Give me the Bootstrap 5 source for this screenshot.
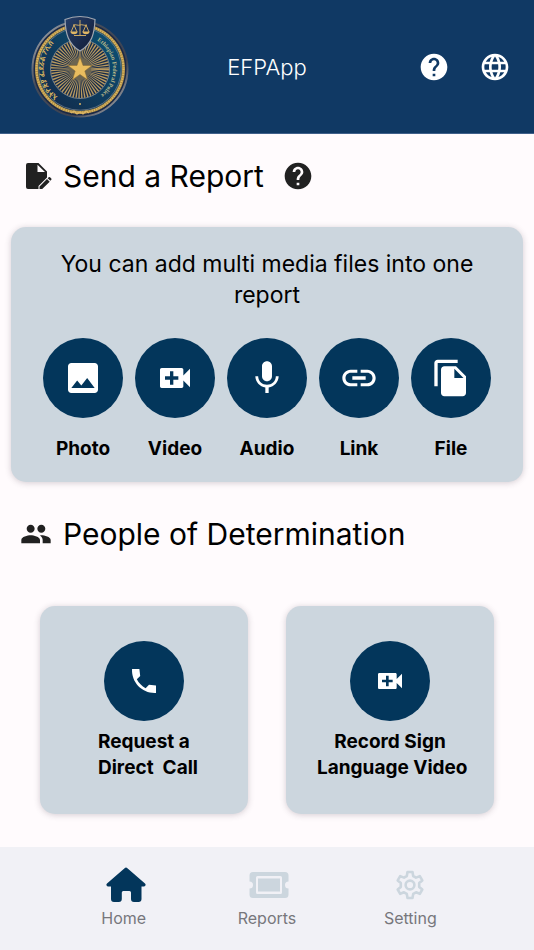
<!DOCTYPE html>
<html lang="en">
<head>
<meta charset="utf-8">
<meta name="viewport" content="width=device-width, initial-scale=1">
<title>EFPApp</title>
<link rel="stylesheet" href="https://cdn.jsdelivr.net/npm/bootstrap@5.3.0/dist/css/bootstrap.min.css">
<style>
  body { font-family: Inter, "Open Sans", sans-serif; background: #fffbfd; color: #000; }
  svg { display: block; fill: currentColor; }
  .app-header { background: #103964; color: #fff; min-height: 134px; border-bottom: 1px solid #40608a; padding: 14px 22px 13px; }
  .app-title { font-size: 22px; line-height: 32px; font-weight: 300; }
  .emblem { margin-left: 6px; }
  .side { flex: 1 1 0; }
  .icon-btn { background: none; border: 0; padding: 0; color: inherit; }
  .heading-row { padding: 22px 20px 0; }
  .heading-row.second { padding-top: 32px; }
  .heading { font-size: 30px; line-height: 40px; font-weight: 400; margin: 0 0 0 11px; }
  .head-icon { width: 32px; color: #212121; }
  .info-btn { margin-left: 18px; }
  .panel { background: #ccd6de; border-radius: 15px; box-shadow: 0 1px 6px rgba(60, 40, 60, .22); }
  .media-panel { margin: 31px 11px 0; padding: 22px 26px 20px; }
  .intro { font-size: 23px; line-height: 31px; margin: 0 8px 27px; }
  .round { width: 80px; height: 80px; border-radius: 50%; background: #03365b; color: #fff; }
  .media-btn { width: 92px; gap: 18px; }
  .label-bold { font-size: 19px; line-height: 26px; font-weight: 700; color: #000; }
  .assist { padding: 52px 40px 24px; gap: 38px; }
  .assist .panel { flex: 1 1 0; min-height: 208px; padding-top: 35px; border: 0; }
  .assist .label-bold { white-space: pre; margin-top: 8px; }
  .tabs { background: #f1f1f6; padding: 17px 52px 20px; min-height: 103px; }
  .tab { color: #77777c; font-size: 16px; line-height: 24px; }
  .tab-icon { height: 42px; color: #ccd6de; }
  .tab.active .tab-icon { color: #03365b; }
</style>
<script src="https://cdn.jsdelivr.net/npm/bootstrap@5.3.0/dist/js/bootstrap.bundle.min.js"></script>
</head>
<body class="d-flex flex-column min-vh-100">

<svg width="0" height="0" class="position-absolute" aria-hidden="true">
  <symbol id="i-help" viewBox="0 0 24 24"><path d="M12 2C6.48 2 2 6.48 2 12s4.48 10 10 10 10-4.48 10-10S17.52 2 12 2zm1 17h-2v-2h2v2zm2.07-7.75l-.9.92C13.45 12.9 13 13.5 13 15h-2v-.5c0-1.1.45-2.1 1.17-2.83l1.24-1.26c.37-.36.59-.86.59-1.41 0-1.1-.9-2-2-2s-2 .9-2 2H8c0-2.21 1.79-4 4-4s4 1.79 4 4c0 .88-.36 1.68-.93 2.25z"/></symbol>
  <symbol id="i-video" viewBox="0 0 24 24"><path d="M17 10.5V7c0-.55-.45-1-1-1H4c-.55 0-1 .45-1 1v10c0 .55.45 1 1 1h12c.55 0 1-.45 1-1v-3.5l4 4v-11l-4 4zM14 13h-3v3H9v-3H6v-2h3V8h2v3h3v2z"/></symbol>
</svg>

<header class="app-header d-flex align-items-center">
  <div class="side">
    <svg class="emblem" width="104" height="106" viewBox="0 0 104 106" role="img" aria-label="Ethiopian Federal Police emblem">
      <defs>
        <linearGradient id="rim" x1="0" y1="0" x2="1" y2="1"><stop offset="0" stop-color="#b9bcc0"/><stop offset=".35" stop-color="#444b59"/><stop offset=".7" stop-color="#3b4252"/><stop offset="1" stop-color="#c3c3c3"/></linearGradient>
        <linearGradient id="band" x1="0" y1="1" x2="1" y2="0"><stop offset="0" stop-color="#132747"/><stop offset="1" stop-color="#0a5478"/></linearGradient>
        <linearGradient id="shield" x1="0" y1="0" x2="1" y2="1"><stop offset="0" stop-color="#27406b"/><stop offset="1" stop-color="#101b36"/></linearGradient>
        <path id="arc-left" d="M33 85A36 36 0 0 1 34 23"/>
        <path id="arc-right" d="M69 26.700A33 33 0 0 1 69 83.300"/>
      </defs>
      <circle cx="52" cy="55" r="47.500" fill="#1b2947" stroke="url(#rim)" stroke-width="2"/>
      <circle cx="52" cy="55" r="43.500" fill="url(#band)" stroke="#b08f45" stroke-width="3"/>
      <circle cx="52" cy="55" r="43.500" fill="none" stroke="#dcb866" stroke-width="2" stroke-dasharray="1.200 1.200"/>
      <circle cx="52" cy="55" r="41.200" fill="none" stroke="#7d8590" stroke-width=".7"/>
      <circle cx="52" cy="55" r="29.500" fill="#172b49" stroke="#8f9699" stroke-width=".8"/>
      <circle cx="52" cy="55" r="18.500" fill="none" stroke="#b89a60" stroke-width="21" stroke-dasharray=".97 .967"/>
      <circle cx="52" cy="55" r="11" fill="#6c6550"/>
      <path d="M52 43l3 8.500h9l-7.200 5.500 2.700 8.700-7.500-5.200-7.500 5.200 2.700-8.700-7.200-5.500h9z" fill="#e9bd5f" stroke="#8a6a31" stroke-width=".5"/>
      <circle cx="52" cy="90" r="1" fill="#dcb564"/>
      <path d="M43 99l3-2 3 3 3-2 3 2 3-3 3 2" fill="none" stroke="#dcb564" stroke-width="1.300"/>
      <g fill="#d9b45f" font-family="'Noto Sans Ethiopic','Noto Sans',sans-serif">
        <text font-size="7" font-weight="700"><textPath href="#arc-left" startOffset="4">ኢትዮጵያ ፌደራል ፖሊስ</textPath></text>
        <text font-size="6" font-weight="700" font-family="'Liberation Serif',serif" fill="#b9b98a"><textPath href="#arc-right">Ethiopian Federal Police</textPath></text>
      </g>
      <path d="M52 2.500c5 0 10 1 15 3C66.500 19 64 30 52 37 40 30 37.500 19 37 5.500 42 3.500 47 2.500 52 2.500z" fill="url(#shield)" stroke="#a1a7b1" stroke-width="1.200"/>
      <path d="M52 6v15M46 21.500h12M45 11c3-1 5 1 7 0s4 1 7 0M46 11l-3 7M46 11l3 7M58 11l-3 7M58 11l3 7" fill="none" stroke="#dfb665" stroke-width=".9"/>
      <path d="M42.500 17.500h7a3.500 2.800 0 0 1-7 0zM54.500 17.500h7a3.500 2.800 0 0 1-7 0z" fill="#dfb665"/>
    </svg>
  </div>
  <h1 class="app-title m-0">EFPApp</h1>
  <div class="side d-flex justify-content-end align-items-center">
    <button class="icon-btn" type="button" aria-label="Help"><svg width="32" height="32"><use href="#i-help"/></svg></button>
    <button class="icon-btn ms-4 ps-1" type="button" aria-label="Language"><svg width="34" height="32" viewBox="0 0 24 24"><path d="M11.990 2C6.470 2 2 6.480 2 12s4.470 10 9.990 10C17.520 22 22 17.520 22 12S17.520 2 11.990 2zm6.930 6h-2.950c-.32-1.250-.78-2.450-1.380-3.560 1.840.63 3.370 1.910 4.330 3.560zM12 4.040c.83 1.200 1.480 2.530 1.910 3.960h-3.820c.43-1.430 1.080-2.760 1.910-3.960zM4.260 14C4.100 13.360 4 12.690 4 12s.1-1.360.26-2h3.380c-.08.66-.14 1.320-.14 2 0 .68.06 1.340.14 2H4.260zm.82 2h2.950c.32 1.250.78 2.450 1.380 3.560-1.840-.63-3.370-1.900-4.330-3.560zm2.950-8H5.080c.96-1.660 2.490-2.930 4.330-3.560C8.810 5.550 8.350 6.750 8.030 8zM12 19.960c-.83-1.200-1.480-2.530-1.910-3.960h3.820c-.43 1.430-1.080 2.760-1.910 3.960zM14.340 14H9.660c-.09-.66-.16-1.320-.16-2 0-.68.07-1.350.16-2h4.680c.09.65.16 1.320.16 2 0 .68-.07 1.340-.16 2zm.25 5.560c.6-1.110 1.060-2.310 1.380-3.560h2.950c-.96 1.650-2.490 2.930-4.330 3.560zM16.360 14c.08-.66.14-1.320.14-2 0-.68-.06-1.340-.14-2h3.380c.16.64.26 1.310.26 2s-.1 1.360-.26 2h-3.380z"/></svg></button>
  </div>
</header>

<main>
  <section aria-labelledby="h-report">
    <div class="heading-row d-flex align-items-center">
      <svg class="head-icon" height="28" viewBox="0 0 32 28"><path d="M8 1h10.500L27 9.500v6L18.500 24v3H8a2 2 0 0 1-2-2V3a2 2 0 0 1 2-2zm9.500 1.800V10H25z"/><path d="M19.500 24.500l7.500-7.500 2.700 2.700-7.500 7.300h-2.700zM27.700 16.200l1-1a1 1 0 0 1 1.300 0l1.300 1.300a1 1 0 0 1 0 1.300l-1 1z"/></svg>
      <h2 id="h-report" class="heading">Send a Report</h2>
      <button class="icon-btn head-icon info-btn" type="button" aria-label="About reports"><svg width="32" height="32"><use href="#i-help"/></svg></button>
    </div>
    <div class="panel media-panel text-center">
      <p class="intro">You can add multi media files into one report</p>
      <div class="d-flex justify-content-center">
        <button class="icon-btn media-btn d-flex flex-column align-items-center" type="button">
          <span class="round d-flex align-items-center justify-content-center"><svg width="40" height="40" viewBox="0 0 24 24"><path d="M21 19V5c0-1.100-.9-2-2-2H5c-1.100 0-2 .9-2 2v14c0 1.100.9 2 2 2h14c1.100 0 2-.9 2-2zM8.500 13.500l2.500 3.010L14.500 12l4.500 6H5l3.500-4.500z"/></svg></span>
          <span class="label-bold">Photo</span>
        </button>
        <button class="icon-btn media-btn d-flex flex-column align-items-center" type="button">
          <span class="round d-flex align-items-center justify-content-center"><svg width="40" height="40"><use href="#i-video"/></svg></span>
          <span class="label-bold">Video</span>
        </button>
        <button class="icon-btn media-btn d-flex flex-column align-items-center" type="button">
          <span class="round d-flex align-items-center justify-content-center"><svg width="40" height="40" viewBox="0 0 24 24"><path d="M12 14c1.660 0 2.990-1.340 2.990-3L15 5c0-1.660-1.340-3-3-3S9 3.340 9 5v6c0 1.660 1.340 3 3 3zm5.300-3c0 3-2.540 5.100-5.300 5.100S6.700 14 6.700 11H5c0 3.410 2.720 6.230 6 6.720V21h2v-3.280c3.280-.48 6-3.300 6-6.720h-1.700z"/></svg></span>
          <span class="label-bold">Audio</span>
        </button>
        <button class="icon-btn media-btn d-flex flex-column align-items-center" type="button">
          <span class="round d-flex align-items-center justify-content-center"><svg width="40" height="40" viewBox="0 0 24 24"><path d="M3.900 12c0-1.710 1.390-3.100 3.100-3.100h4V7H7c-2.760 0-5 2.240-5 5s2.240 5 5 5h4v-1.900H7c-1.710 0-3.100-1.390-3.100-3.100zM8 13h8v-2H8v2zm9-6h-4v1.900h4c1.710 0 3.100 1.390 3.100 3.100s-1.390 3.100-3.100 3.100h-4V17h4c2.760 0 5-2.240 5-5s-2.240-5-5-5z"/></svg></span>
          <span class="label-bold">Link</span>
        </button>
        <button class="icon-btn media-btn d-flex flex-column align-items-center" type="button">
          <span class="round d-flex align-items-center justify-content-center"><svg width="40" height="40" viewBox="0 0 24 24"><path d="M16 1H4c-1.100 0-2 .9-2 2v14h2V3h12V1zm-1 4l6 6v10c0 1.100-.9 2-2 2H7.990C6.890 23 6 22.100 6 21l.01-14c0-1.100.89-2 1.990-2h7zm-1 7h5.500L14 6.500V12z"/></svg></span>
          <span class="label-bold">File</span>
        </button>
      </div>
    </div>
  </section>

  <section aria-labelledby="h-people">
    <div class="heading-row second d-flex align-items-center">
      <svg class="head-icon" height="32" viewBox="0 0 24 24"><path d="M16 11c1.660 0 2.990-1.340 2.990-3S17.660 5 16 5s-3 1.340-3 3 1.340 3 3 3zm-8 0c1.660 0 2.990-1.340 2.990-3S9.660 5 8 5 5 6.340 5 8s1.340 3 3 3zm0 2c-2.330 0-7 1.170-7 3.500V19h14v-2.500c0-2.330-4.670-3.500-7-3.500zm8 0c-.29 0-.62.02-.97.05 1.160.84 1.970 1.970 1.970 3.450V19h6v-2.500c0-2.330-4.670-3.500-7-3.500z"/></svg>
      <h2 id="h-people" class="heading">People of Determination</h2>
    </div>
    <div class="assist d-flex">
      <button class="panel d-flex flex-column align-items-center" type="button">
        <span class="round d-flex align-items-center justify-content-center"><svg width="32" height="32" viewBox="0 0 24 24"><path d="M21 15.460l-5.270-.61-2.520 2.520c-2.830-1.440-5.150-3.750-6.590-6.590l2.530-2.530L8.540 3H3.030C2.450 13.180 10.820 21.550 21 20.970v-5.510z"/></svg></span>
        <span class="label-bold text-start ps-2">Request a
Direct  Call</span>
      </button>
      <button class="panel d-flex flex-column align-items-center" type="button">
        <span class="round d-flex align-items-center justify-content-center"><svg width="32" height="32"><use href="#i-video"/></svg></span>
        <span class="label-bold text-center">Record Sign
 Language Video</span>
      </button>
    </div>
  </section>
</main>

<nav class="tabs d-flex mt-auto" aria-label="Main">
  <a class="tab active side d-flex flex-column align-items-center text-decoration-none" href="#" aria-current="page">
    <span class="tab-icon d-flex align-items-center"><svg class="ms-1" width="40" height="36" viewBox="0 0 40 36"><path d="M18.600 1.200a2 2 0 0 1 2.800 0L39 16.400c1.200 1.200.6 3-1 3h-2.500V32a3 3 0 0 1-3 3H28a3 3 0 0 1-3-3v-6.500a1.500 1.500 0 0 0-1.500-1.500h-6.200a1.500 1.500 0 0 0-1.500 1.500V32a3 3 0 0 1-3 3H8a3 3 0 0 1-3-3V19.400H2c-1.600 0-2.200-1.800-1-3z"/></svg></span>
    <span>Home</span>
  </a>
  <a class="tab side d-flex flex-column align-items-center text-decoration-none" href="#">
    <span class="tab-icon d-flex align-items-center"><svg class="ms-1" width="40" height="26" viewBox="0 0 40 26"><path fill-rule="evenodd" d="M4 0h32a3.500 3.500 0 0 1 3.500 3.500V9.500a3.500 3.500 0 0 0 0 7v6A3.500 3.500 0 0 1 36 26H4a3.500 3.500 0 0 1-3.500-3.500v-6a3.500 3.500 0 0 0 0-7v-6A3.500 3.500 0 0 1 4 0zM8.500 4A1.500 1.500 0 0 0 7 5.500v15A1.500 1.500 0 0 0 8.500 22h23a1.500 1.500 0 0 0 1.500-1.500v-15A1.500 1.500 0 0 0 31.500 4zM9 6.500h22v13H9z"/></svg></span>
    <span>Reports</span>
  </a>
  <a class="tab side d-flex flex-column align-items-center text-decoration-none" href="#">
    <span class="tab-icon d-flex align-items-center"><svg width="28" height="30" viewBox="0 0 28 30"><g fill="none" stroke="currentColor" stroke-width="2.600" stroke-linejoin="round"><path d="M11.500 2h5l.7 4 2.800 1.600 3.800-1.500 2.500 4.300-3.100 2.600v3.900l3.100 2.600-2.500 4.300-3.800-1.500-2.800 1.600-.7 4.100h-5l-.7-4.100L8 22.300l-3.800 1.500-2.500-4.300 3.100-2.600V13l-3.100-2.600 2.500-4.300L8 7.600 10.800 6z"/><circle cx="14" cy="15" r="4.400"/></g></svg></span>
    <span>Setting</span>
  </a>
</nav>
</body>
</html>
